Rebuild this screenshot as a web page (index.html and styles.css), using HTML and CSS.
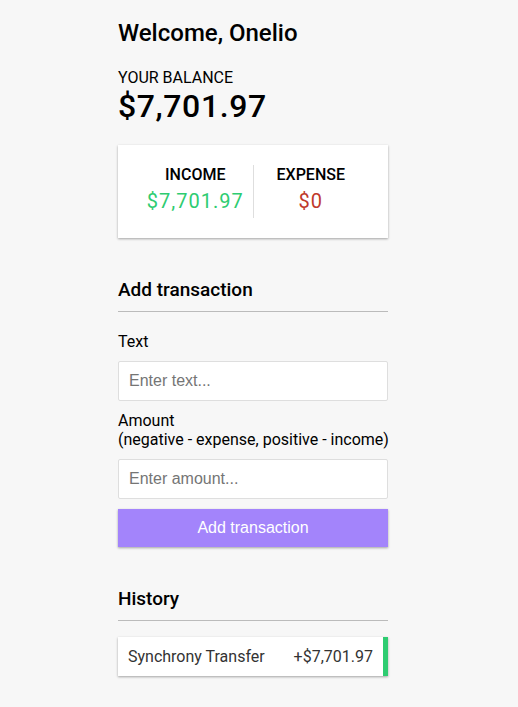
FILE: index.html
```html
<!DOCTYPE html>
<html lang="en">
<head>
<meta charset="utf-8">
<title>Expense Tracker</title>
<link rel="stylesheet" href="styles.css">
</head>
<body>
<div class="container">
  <h2 class="welcome">Welcome, Onelio</h2>
  <h4 class="balance-label">Your Balance</h4>
  <h1 class="balance">$7,701.97</h1>

  <div class="inc-exp-container">
    <div class="inc-exp">
      <h4>Income</h4>
      <p class="money plus">$7,701.97</p>
    </div>
    <div class="inc-exp">
      <h4>Expense</h4>
      <p class="money minus">$0</p>
    </div>
  </div>

  <h3 class="section-title">Add transaction</h3>
  <form class="form">
    <div class="form-control">
      <label for="text">Text</label>
      <input type="text" id="text" placeholder="Enter text...">
    </div>
    <div class="form-control">
      <label for="amount">Amount <br>(negative - expense, positive - income)</label>
      <input type="number" id="amount" placeholder="Enter amount...">
    </div>
    <button type="button" class="btn">Add transaction</button>
  </form>

  <h3 class="section-title history">History</h3>
  <ul class="list">
    <li class="plus">Synchrony Transfer <span>+$7,701.97</span></li>
  </ul>
</div>
</body>
</html>
```

FILE: styles.css
```css
* {
  box-sizing: border-box;
}

body {
  background-color: #f7f7f7;
  margin: 0;
  padding-right: 12px;
  display: flex;
  flex-direction: column;
  align-items: center;
  font-family: Roboto, "Liberation Sans", sans-serif;
  color: #000;
}

.container {
  width: 270px;
  margin: 19px 0 20px;
}

.welcome {
  font-size: 24px;
  font-weight: 500;
  margin: 0 0 21px;
  line-height: 28px;
}

.balance-label {
  font-size: 16px;
  font-weight: 400;
  margin: 0;
  text-transform: uppercase;
  line-height: 19px;
}

.balance {
  font-size: 32px;
  font-weight: 500;
  letter-spacing: 0.6px;
  margin: 0;
  line-height: 38px;
}

.inc-exp-container {
  background-color: #fff;
  box-shadow: 0 1px 3px rgba(0, 0, 0, 0.12), 0 1px 2px rgba(0, 0, 0, 0.24);
  padding: 20px;
  display: flex;
  justify-content: space-between;
  margin: 20px 0;
}

.inc-exp {
  flex: 1;
  text-align: center;
}

.inc-exp:first-of-type {
  border-right: 1px solid #dedede;
}

.inc-exp h4 {
  margin: 0;
  font-size: 16px;
  font-weight: 500;
  text-transform: uppercase;
  line-height: 19px;
}

.money {
  font-size: 20px;
  letter-spacing: 1px;
  margin: 5px 0;
  line-height: 24px;
}

.money.plus {
  color: #2ecc71;
}

.money.minus {
  color: #c0392b;
}

.section-title {
  font-size: 19px;
  font-weight: 500;
  border-bottom: 1px solid #bbb;
  padding-bottom: 10px;
  margin: 41px 0 10px;
  line-height: 22px;
}

label {
  display: inline-block;
  margin: 10px 0;
  font-size: 16px;
  line-height: 19px;
  white-space: nowrap;
}

input {
  border: 1px solid #dedede;
  border-radius: 2px;
  display: block;
  font-size: 16px;
  font-family: "Liberation Sans", Arial, sans-serif;
  padding: 10px;
  width: 100%;
  height: 40px;
  background: #fff;
}

input::placeholder {
  color: #757575;
}

.btn {
  cursor: pointer;
  background-color: #a384fb;
  box-shadow: 0 1px 3px rgba(0, 0, 0, 0.12), 0 1px 2px rgba(0, 0, 0, 0.24);
  color: #fff;
  border: 0;
  display: block;
  font-size: 16px;
  font-family: "Liberation Sans", Arial, sans-serif;
  margin: 10px 0 30px;
  padding: 10px;
  width: 100%;
  height: 38px;
}

.list {
  list-style-type: none;
  padding: 0;
  margin: 0;
}

.list li {
  background-color: #fff;
  box-shadow: 0 1px 3px rgba(0, 0, 0, 0.12), 0 1px 2px rgba(0, 0, 0, 0.24);
  color: #333;
  display: flex;
  justify-content: space-between;
  padding: 10px;
  margin: 16px 0 0;
  font-size: 16px;
  line-height: 19px;
}

.list li.plus {
  border-right: 5px solid #2ecc71;
}
```
